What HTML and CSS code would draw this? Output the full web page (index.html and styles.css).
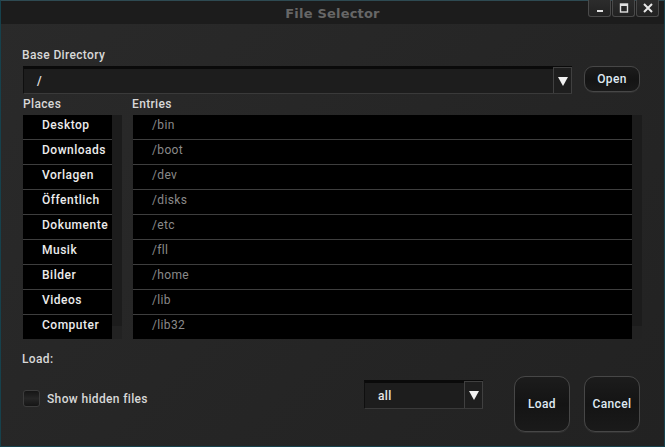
FILE: index.html
```html
<!DOCTYPE html>
<html>
<head>
<meta charset="utf-8">
<link rel="stylesheet" href="styles.css">
</head>
<body>
<div class="window">
  <div class="titlebar">
    <span class="title">File Selector</span>
    <div class="wbtns">
      <div class="wbtn"><svg width="10" height="10" viewBox="0 0 10 10"><rect x="2" y="7" width="6" height="2" fill="#e0e0e0"/></svg></div>
      <div class="wbtn"><svg width="10" height="10" viewBox="0 0 10 10"><rect x="1.5" y="1" width="7" height="8" fill="none" stroke="#e0e0e0" stroke-width="1.4"/><rect x="1.5" y="1" width="7" height="2" fill="#e0e0e0"/></svg></div>
      <div class="wbtn"><svg width="12" height="12" viewBox="0 0 12 12"><path d="M2 2 L10 10 M10 2 L2 10" stroke="#e8e8e8" stroke-width="2"/></svg></div>
    </div>
  </div>
  <div class="content">
    <div class="label lbl-base">Base Directory</div>
    <div class="dir-row">
      <div class="combo combo-dir">
        <span class="combo-text">/</span>
        <div class="combo-arrow"><svg width="10" height="10" viewBox="0 0 10 10"><path d="M0 1 L10 1 L5 10 Z" fill="#f2f2f2"/></svg></div>
      </div>
      <div class="btn btn-open">Open</div>
    </div>
    <div class="lists">
      <div class="col col-places">
        <div class="label">Places</div>
        <div class="list">
          <div class="rows places">
            <div class="row">Desktop</div>
            <div class="row">Downloads</div>
            <div class="row">Vorlagen</div>
            <div class="row">Öffentlich</div>
            <div class="row">Dokumente</div>
            <div class="row">Musik</div>
            <div class="row">Bilder</div>
            <div class="row">Videos</div>
            <div class="row">Computer</div>
          </div>
          <div class="sbar"></div>
        </div>
      </div>
      <div class="col col-entries">
        <div class="label">Entries</div>
        <div class="list">
          <div class="rows entries">
            <div class="row">/bin</div>
            <div class="row">/boot</div>
            <div class="row">/dev</div>
            <div class="row">/disks</div>
            <div class="row">/etc</div>
            <div class="row">/fll</div>
            <div class="row">/home</div>
            <div class="row">/lib</div>
            <div class="row">/lib32</div>
          </div>
          <div class="sbar"></div>
        </div>
      </div>
    </div>
    <div class="label lbl-load">Load:</div>
    <div class="bottom">
      <div class="check">
        <div class="box"></div>
        <span class="check-text">Show hidden files</span>
      </div>
      <div class="combo combo-filter">
        <span class="combo-text">all</span>
        <div class="combo-arrow"><svg width="10" height="10" viewBox="0 0 10 10"><path d="M0 1 L10 1 L5 10 Z" fill="#f2f2f2"/></svg></div>
      </div>
      <div class="btn btn-big btn-load">Load</div>
      <div class="btn btn-big">Cancel</div>
    </div>
  </div>
</div>
</body>
</html>
```
FILE: styles.css
```css
* { box-sizing: border-box; }
html, body { margin: 0; padding: 0; background: #173a44; }
body {
  font-family: Roboto, "Liberation Sans", sans-serif;
  font-size: 12px;
  letter-spacing: 0.35px;
}
.window {
  width: 665px;
  height: 447px;
  border: 1px solid #16414c;
  border-top-color: #2e4a52;
  background: linear-gradient(135deg, #2a2a2a 0%, #252525 60%, #222222 100%);
  display: flex;
  flex-direction: column;
}
.titlebar {
  height: 23px;
  background: #1c1c1c;
  position: relative;
  display: flex;
  align-items: center;
  justify-content: center;
}
.title {
  font-family: "DejaVu Sans", sans-serif;
  font-weight: bold;
  font-size: 13px;
  letter-spacing: 0.2px;
  color: #676767;
  margin-top: 1px;
}
.wbtns {
  position: absolute;
  right: 5px;
  top: -1px;
  display: flex;
  gap: 1px;
}
.wbtn {
  width: 23px;
  height: 17px;
  background: linear-gradient(#2c2c2c, #222);
  border: 1px solid #4a4a4a;
  border-top: none;
  border-radius: 0 0 3px 3px;
  display: flex;
  align-items: center;
  justify-content: center;
}
.content {
  padding: 0 0 0 21px;
  display: flex;
  flex-direction: column;
}
.label {
  color: #d8d8d8;
  font-weight: 500;
  line-height: 14px;
  height: 14px;
}
.lbl-base { margin-top: 24px; }
.dir-row {
  margin-top: 4px;
  display: flex;
  align-items: flex-start;
  height: 28px;
}
.combo {
  display: flex;
  background: #1d1d1d;
  border-top: 3px solid #0a0a0a;
  border-left: 1px solid #0f0f0f;
  border-bottom: 1px solid #3a3a3a;
  align-items: center;
}
.combo-dir {
  margin-left: 1px;
  width: 549px;
  height: 28px;
}
.combo-text {
  flex: 1;
  color: #e6e6e6;
  font-weight: 500;
  padding-left: 13px;
}
.combo-arrow {
  width: 19px;
  align-self: stretch;
  margin-top: -2px;
  border: 1px solid #404040;
  border-bottom: none;
  background: #1e1e1e;
  display: flex;
  align-items: center;
  justify-content: center;
}
.btn {
  display: flex;
  align-items: center;
  justify-content: center;
  border: 1px solid #474747;
  background: linear-gradient(#1c1c1c, #141414 50%, #1a1a1a);
  color: #dfe9f2;
  font-weight: 500;
  border-radius: 9px;
  box-shadow: 0 1px 0 #303030;
}
.btn-open {
  margin-left: 12px;
  width: 56px;
  height: 26px;
}
.lists {
  margin-top: 3px;
  display: flex;
}
.col { display: flex; flex-direction: column; }
.col-places { width: 101px; margin-left: 1px; }
.col-entries { margin-left: 9px; }
.col-entries .label { margin-left: -1px; }
.list {
  margin-top: 4px;
  display: flex;
}
.rows { display: flex; flex-direction: column; }
.row {
  height: 25px;
  background: #000;
  border-bottom: 1px solid #3e3e3e;
  line-height: 20px;
}
.row:last-child { border-bottom: none; height: 24px; }
.places { width: 89px; }
.places .row {
  color: #ececec;
  font-weight: 500;
  letter-spacing: 0.5px;
  padding-left: 19px;
}
.entries { width: 499px; }
.entries .row {
  color: #8a8a8a;
  padding-left: 19px;
}
.sbar {
  width: 10px;
  background: linear-gradient(#1c1c1c 0, #1c1c1c 94%, #222 94%);
}
.lbl-load { margin-top: 13px; }
.bottom {
  margin-top: 10px;
  display: flex;
  align-items: flex-start;
}
.check {
  display: flex;
  align-items: center;
  margin-top: 14px;
  width: 341px;
  margin-left: 1px;
}
.box {
  width: 17px;
  height: 17px;
  border: 1px solid #3c3c3c;
  border-radius: 3px;
  background: linear-gradient(#151515, #262626 50%, #151515);
}
.check-text {
  color: #d8d8d8;
  font-weight: 500;
  margin-left: 7px;
}
.combo-filter {
  margin-top: 4px;
  width: 119px;
  height: 29px;
}
.combo-filter .combo-text { padding-left: 13px; }
.btn-big {
  width: 56px;
  height: 56px;
  border-radius: 11px;
}
.btn-load { margin-left: 31px; margin-right: 14px; }
```
